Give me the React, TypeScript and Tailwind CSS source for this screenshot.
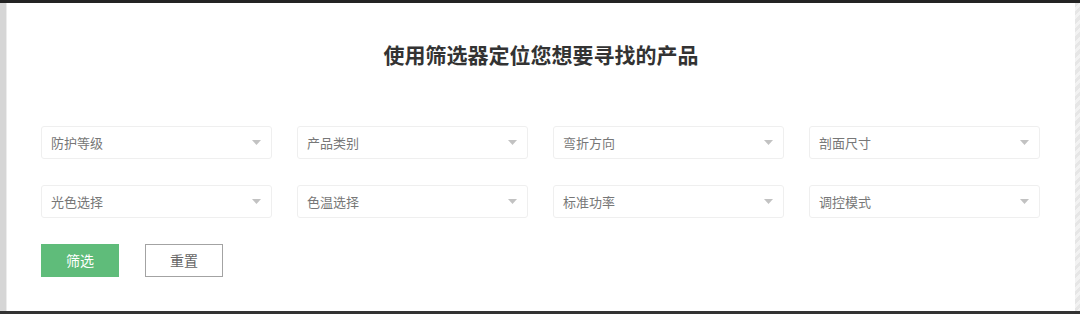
import React from 'react';

const filters: string[][] = [
  ['防护等级', '产品类别', '弯折方向', '剖面尺寸'],
  ['光色选择', '色温选择', '标准功率', '调控模式'],
];

const font = "font-['Noto_Sans_CJK_SC','Noto_Sans',sans-serif]";

const FilterSelect: React.FC<{ label: string }> = ({ label }) => (
  <div className="flex h-[33px] w-[231px] items-center justify-between rounded-[3px] border border-[#efefef] bg-white pl-[9px] pr-[10px]">
    <span className="text-[13px] text-[#777]">{label}</span>
    <svg width="9" height="5" viewBox="0 0 9 5">
      <path d="M0 0 H9 L4.5 5 Z" fill="#c2c2c2" />
    </svg>
  </div>
);

export default function App() {
  return (
    <div className={`flex h-[314px] w-[1080px] flex-col bg-[#333] ${font}`}>
      <div className="h-[3px] bg-[#232323]" />
      <div className="flex flex-1">
        <div className="w-[6px] bg-[#d6d6d6]" />
        <div className="w-[1px] bg-[#ececec]" />
        <div className="flex flex-1 flex-col bg-white">
          <h1 className="mt-[36px] text-center text-[21px] font-bold leading-[30px] text-[#333]">
            使用筛选器定位您想要寻找的产品
          </h1>
          <div className="mt-[57px] flex flex-col gap-[26px] pl-[34px]">
            {filters.map((row, i) => (
              <div key={i} className="flex gap-[25px]">
                {row.map((label) => (
                  <FilterSelect key={label} label={label} />
                ))}
              </div>
            ))}
          </div>
          <div className="mt-[26px] flex gap-[26px] pl-[34px]">
            <button className="h-[33px] w-[78px] bg-[#5fbc7a] text-[14px] text-white">
              筛选
            </button>
            <button className="h-[33px] w-[78px] border border-[#a3a3a3] bg-white text-[14px] text-[#666]">
              重置
            </button>
          </div>
        </div>
        <div className="w-[5px] bg-[repeating-linear-gradient(135deg,#e6e6e6_0px,#e6e6e6_3px,#f2f2f2_3px,#f2f2f2_6px)]" />
      </div>
      <div className="h-[3px] bg-[#333]" />
    </div>
  );
}
